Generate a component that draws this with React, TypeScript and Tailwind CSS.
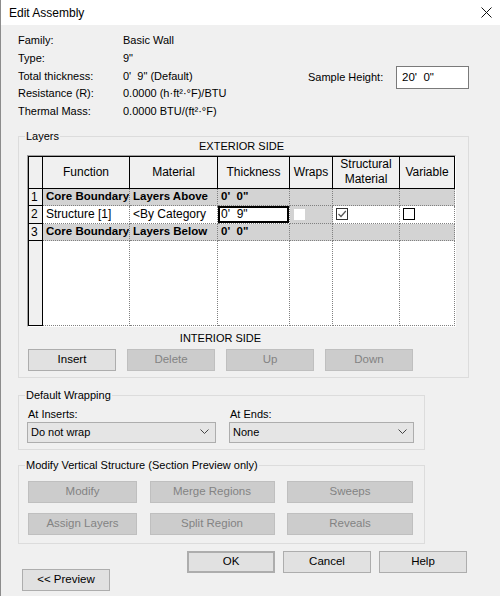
import { ReactNode } from "react";

const cols = ["w-[15px]", "w-[87px]", "w-[88px]", "w-[72px]", "w-[43px]", "w-[67px]", "w-[55px]"];

const info = [
    ["Family:", "Basic Wall"],
    ["Type:", "9\""],
    ["Total thickness:", "0'  9\" (Default)"],
    ["Resistance (R):", "0.0000 (h·ft²·°F)/BTU"],
    ["Thermal Mass:", "0.0000 BTU/(ft²·°F)"],
];

function Btn({ children, disabled, className = "" }: { children: ReactNode; disabled?: boolean; className?: string }) {
    return (
        <div
            className={
                "h-[22px] flex items-center justify-center text-[11.5px] border " +
                (disabled ? "bg-[#cccccc] border-[#bfbfbf] text-[#838383] " : "bg-[#e1e1e1] border-[#adadad] text-black ") +
                className
            }
        >
            {children}
        </div>
    );
}

function Group({ label, className = "", children }: { label: string; className?: string; children: ReactNode }) {
    return (
        <div className={"relative border border-[#dcdcdc] " + className}>
            <span className="absolute left-[6px] -top-[7px] px-[1px] bg-[#f0f0f0] text-[11px] leading-[13px]">{label}</span>
            {children}
        </div>
    );
}

function Select({ value, className = "" }: { value: string; className?: string }) {
    return (
        <div className={"h-[21px] flex items-center justify-between bg-[#e5e5e5] border border-[#adadad] pl-[3px] pr-[6px] text-[11px] " + className}>
            <span>{value}</span>
            <svg width="9" height="6" viewBox="0 0 9 6">
                <path d="M0.5 0.5 L4.5 4.5 L8.5 0.5" fill="none" stroke="#444" strokeWidth="1" />
            </svg>
        </div>
    );
}

function Check({ checked, tone = "border-black" }: { checked?: boolean; tone?: string }) {
    return (
        <div className={"w-[12px] h-[12px] bg-white border flex items-center justify-center " + tone}>
            {checked && (
                <svg width="10" height="10" viewBox="0 0 10 10">
                    <path d="M1.5 5 L4 7.5 L8.8 2" fill="none" stroke="#555" strokeWidth="1.2" />
                </svg>
            )}
        </div>
    );
}

type Row = { n: string; cells: ReactNode[]; gray: boolean; bold: boolean; h: string };

export default function App() {
    const rows: Row[] = [
        { n: "1", cells: ["Core Boundary", "Layers Above", "0'  0\"", "", "", ""], gray: true, bold: true, h: "h-[17px]" },
        {
            n: "2",
            cells: [
                "Structure [1]",
                "<By Category",
                <div key="t" className="h-full w-full border-2 border-black bg-white pl-[1px] flex items-center whitespace-pre">0'  9"</div>,
                <div key="w" className="w-[11px] h-[11px] bg-white ml-[4px]" />,
                <div key="s" className="ml-[3px]"><Check checked tone="border-[#333]" /></div>,
                <div key="v" className="ml-[3px]"><Check /></div>,
            ],
            gray: false,
            bold: false,
            h: "h-[18px]",
        },
        { n: "3", cells: ["Core Boundary", "Layers Below", "0'  0\"", "", "", ""], gray: true, bold: true, h: "h-[17px]" },
    ];

    return (
        <div className="w-[500px] h-[596px] bg-[#f0f0f0] border-l border-[#8c8c8c] overflow-hidden text-black font-['Liberation_Sans',Arial,sans-serif]">
            {/* title bar */}
            <div className="h-[25px] bg-white flex items-center justify-between pl-[8px] pr-[8px]">
                <span className="text-[12px]">Edit Assembly</span>
                <svg width="11" height="11" viewBox="0 0 11 11" className="mb-[1px]">
                    <path d="M0.5 0.5 L10.5 10.5 M10.5 0.5 L0.5 10.5" stroke="#111" strokeWidth="1" />
                </svg>
            </div>

            {/* properties */}
            <div className="flex pt-[7px]">
                <div className="ml-[17px] grid grid-cols-[105px_auto] text-[11px] leading-[17.75px]">
                    {info.map(([k, v]) => (
                        <div key={k} className="contents">
                            <span>{k}</span>
                            <span className="whitespace-pre">{v}</span>
                        </div>
                    ))}
                </div>
                <div className="ml-auto mr-[31px] mt-[34px] flex items-center h-[23px]">
                    <span className="w-[88px] text-[11px]">Sample Height:</span>
                    <div className="w-[73px] h-[23px] bg-white border border-[#7a7a7a] flex items-center pl-[5px] text-[11.5px] whitespace-pre">20'  0"</div>
                </div>
            </div>

            {/* layers */}
            <Group label="Layers" className="ml-[17px] mt-[15px] w-[451px]">
                <div className="pt-[3px] ml-[8px] w-[429px] text-center text-[11px] leading-[13px]">EXTERIOR SIDE</div>
                <div className="mt-[2px] ml-[8px] w-[429px] border border-[#a0a0a0] border-b-white border-r-white bg-white text-[12px]">
                    <div className="flex h-[33px]">
                        {["", "Function", "Material", "Thickness", "Wraps", "Structural Material", "Variable"].map((h, i) => (
                            <div
                                key={i}
                                className={
                                    cols[i] +
                                    " flex items-center justify-center text-center leading-[15px] bg-[#f0f0f0] border-t border-b border-r border-black" +
                                    (i === 0 ? " border-l" : "")
                                }
                            >
                                {h}
                            </div>
                        ))}
                    </div>
                    {rows.map((r) => (
                        <div key={r.n} className={"flex " + r.h + (r.bold ? " font-bold" : "")}>
                            <div className={cols[0] + " bg-[#f0f0f0] border-l border-r border-b border-black pl-[2px] font-normal leading-[16px]"}>{r.n}</div>
                            {r.cells.map((c, i) => (
                                <div
                                    key={i}
                                    className={
                                        cols[i + 1] +
                                        " flex items-center overflow-hidden whitespace-pre border-r border-b border-dotted border-[#808080] " +
                                        (r.gray || i === 3 ? "bg-[#d3d3d3] " : "bg-white ") +
                                        (typeof c === "string" ? "pl-[3px] " : "") +
                                        (r.bold ? "text-[11.5px]" : "")
                                    }
                                >
                                    {c}
                                </div>
                            ))}
                        </div>
                    ))}
                    <div className="flex h-[85px]">
                        <div className={cols[0] + " bg-[#f0f0f0] border-l border-r border-b border-black"} />
                        {cols.slice(1).map((c, i) => (
                            <div key={i} className={c + " border-r border-b border-dotted border-[#808080]"} />
                        ))}
                    </div>
                </div>
                <div className="mt-[4px] ml-[9px] w-[385px] text-center text-[11px] leading-[14px]">INTERIOR SIDE</div>
                <div className="mt-[4px] ml-[9px] mb-[6px] flex gap-[11px]">
                    <Btn className="w-[88px]">Insert</Btn>
                    <Btn disabled className="w-[88px]">Delete</Btn>
                    <Btn disabled className="w-[88px]">Up</Btn>
                    <Btn disabled className="w-[88px]">Down</Btn>
                </div>
            </Group>

            {/* default wrapping */}
            <Group label="Default Wrapping" className="ml-[17px] mt-[17px] w-[407px]">
                <div className="pt-[11px] pb-[6px] flex gap-[13px] ml-[8px]">
                    <div className="w-[189px]">
                        <div className="h-[14px] leading-[14px] text-[11px] pl-[1px]">At Inserts:</div>
                        <Select value="Do not wrap" className="mt-[1px]" />
                    </div>
                    <div className="w-[185px]">
                        <div className="h-[14px] leading-[14px] text-[11px] pl-[1px]">At Ends:</div>
                        <Select value="None" className="mt-[1px]" />
                    </div>
                </div>
            </Group>

            {/* modify vertical structure */}
            <Group label="Modify Vertical Structure (Section Preview only)" className="ml-[17px] mt-[15px] w-[407px]">
                <div className="pt-[15px] pb-[8px] ml-[9px] grid grid-cols-[109px_125px_126px] gap-x-[12.5px] gap-y-[10px]">
                    <Btn disabled className="h-[21px]">Modify</Btn>
                    <Btn disabled className="h-[21px]">Merge Regions</Btn>
                    <Btn disabled className="h-[21px]">Sweeps</Btn>
                    <Btn disabled className="h-[21px]">Assign Layers</Btn>
                    <Btn disabled className="h-[21px]">Split Region</Btn>
                    <Btn disabled className="h-[21px]">Reveals</Btn>
                </div>
            </Group>

            {/* footer */}
            <div className="flex items-start mt-[7px]">
                <Btn className="w-[88px] ml-[21px] mt-[18px]">&lt;&lt; Preview</Btn>
                <Btn className="w-[88px] ml-[77px] border-2 border-[#0078d7]">OK</Btn>
                <Btn className="w-[88px] ml-[8px]">Cancel</Btn>
                <Btn className="w-[88px] ml-[8px]">Help</Btn>
            </div>
        </div>
    );
}
